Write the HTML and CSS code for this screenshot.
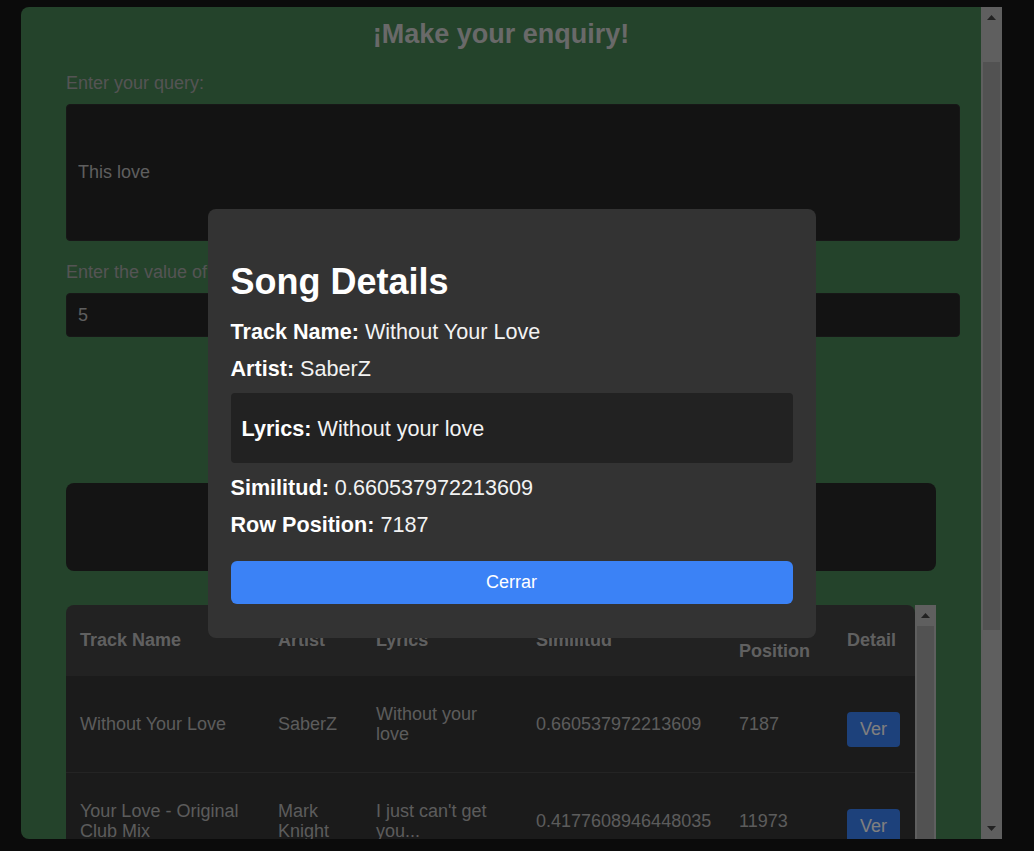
FILE: index.html
```html
<!DOCTYPE html>
<html lang="en">
<head>
<meta charset="utf-8">
<title>¡Make your enquiry!</title>
<link rel="stylesheet" href="styles.css">
</head>
<body>
<div class="frame">
  <div class="app">
    <main class="app-scroll">
      <h1 class="title">¡Make your enquiry!</h1>
      <form class="query-form">
        <div class="field">
          <label class="field-label" for="query">Enter your query:</label>
          <input class="field-input field-input--tall" id="query" type="text" value="This love">
        </div>
        <div class="field field--last">
          <label class="field-label" for="topk">Enter the value of k:</label>
          <input class="field-input" id="topk" type="text" value="5">
        </div>
        <div class="actions">
          <button class="search-btn" type="button">Search</button>
        </div>
      </form>

      <section class="results-box" aria-label="Results"></section>

      <div class="table-scroll">
        <div class="table-viewport">
          <table class="results-table">
            <colgroup>
              <col class="col-track">
              <col class="col-artist">
              <col class="col-lyrics">
              <col class="col-sim">
              <col class="col-pos">
              <col class="col-detail">
            </colgroup>
            <thead>
              <tr>
                <th>Track Name</th>
                <th>Artist</th>
                <th>Lyrics</th>
                <th>Similitud</th>
                <th>Row Position</th>
                <th>Detail</th>
              </tr>
            </thead>
            <tbody>
              <tr>
                <td>Without Your Love</td>
                <td>SaberZ</td>
                <td>Without your love</td>
                <td>0.660537972213609</td>
                <td>7187</td>
                <td><button class="ver-btn" type="button">Ver</button></td>
              </tr>
              <tr>
                <td>Your Love - Original Club Mix</td>
                <td>Mark Knight</td>
                <td>I just can't get you...</td>
                <td>0.4177608946448035</td>
                <td>11973</td>
                <td><button class="ver-btn" type="button">Ver</button></td>
              </tr>
              <tr>
                <td>This Love</td>
                <td>Maroon 5</td>
                <td>I was so high I did not...</td>
                <td>0.3981265417720384</td>
                <td>2044</td>
                <td><button class="ver-btn" type="button">Ver</button></td>
              </tr>
              <tr>
                <td>Love Me Like You Do</td>
                <td>Ellie Goulding</td>
                <td>You're the light, you're...</td>
                <td>0.3725519083371904</td>
                <td>9310</td>
                <td><button class="ver-btn" type="button">Ver</button></td>
              </tr>
              <tr>
                <td>Crazy in Love</td>
                <td>Beyoncé</td>
                <td>Yes, so crazy right now...</td>
                <td>0.3560271984436611</td>
                <td>15402</td>
                <td><button class="ver-btn" type="button">Ver</button></td>
              </tr>
            </tbody>
          </table>
        </div>
        <div class="vscroll" aria-hidden="true">
          <div class="vscroll-btn">
            <svg class="vscroll-arrow" width="9" height="5" viewBox="0 0 9 5"><polygon points="0,5 4.5,0 9,5"/></svg>
          </div>
          <div class="vscroll-track">
            <div class="vscroll-thumb vscroll-thumb--table"></div>
          </div>
          <div class="vscroll-btn">
            <svg class="vscroll-arrow" width="9" height="5" viewBox="0 0 9 5"><polygon points="0,0 9,0 4.5,5"/></svg>
          </div>
        </div>
      </div>
    </main>

    <div class="vscroll" aria-hidden="true">
      <div class="vscroll-btn">
        <svg class="vscroll-arrow" width="9" height="5" viewBox="0 0 9 5"><polygon points="0,5 4.5,0 9,5"/></svg>
      </div>
      <div class="vscroll-track vscroll-track--main">
        <div class="vscroll-thumb vscroll-thumb--main"></div>
      </div>
      <div class="vscroll-btn">
        <svg class="vscroll-arrow" width="9" height="5" viewBox="0 0 9 5"><polygon points="0,0 9,0 4.5,5"/></svg>
      </div>
    </div>
  </div>
</div>

<div class="overlay">
  <div class="modal" role="dialog" aria-labelledby="modal-title">
    <h2 class="modal-title" id="modal-title">Song Details</h2>
    <p class="modal-line"><strong>Track Name:</strong> Without Your Love</p>
    <p class="modal-line"><strong>Artist:</strong> SaberZ</p>
    <div class="lyrics-box">
      <p class="modal-line"><strong>Lyrics:</strong> Without your love</p>
    </div>
    <p class="modal-line"><strong>Similitud:</strong> 0.660537972213609</p>
    <p class="modal-line"><strong>Row Position:</strong> 7187</p>
    <button class="close-btn" type="button">Cerrar</button>
  </div>
</div>
</body>
</html>
```

FILE: styles.css
```css
html, body {
  margin: 0;
  height: 100%;
  overflow: hidden;
  background: #161616;
  font-family: "Liberation Sans", Arial, sans-serif;
  font-size: 18px;
}

.frame {
  height: 100%;
  box-sizing: border-box;
  padding: 7px 32px 12px 21px;
}

.app {
  height: 100%;
  display: flex;
}

.app-scroll {
  flex: 1;
  min-width: 0;
  overflow: hidden;
  box-sizing: border-box;
  padding: 12px 45px 0;
  background: #488656;
  border-radius: 8px 0 0 8px;
}

.title {
  margin: 0 0 23px;
  font-size: 27px;
  font-weight: bold;
  line-height: 31px;
  color: #d2d2d2;
  text-align: center;
}

.query-form {
  margin: 0;
}

.field {
  margin-bottom: 21px;
}

.field--last {
  margin-bottom: 0;
}

.field-label {
  display: block;
  margin-bottom: 10px;
  color: #a8a8a8;
  font-size: 18px;
  line-height: 21px;
}

.field-input {
  display: block;
  width: 100%;
  height: 42px;
  padding: 0 11px;
  margin: 0;
  border: 1px solid #2e2e2e;
  border-radius: 4px;
  background: #262626;
  color: #bcbcbc;
  font: inherit;
  outline: none;
}

.field-input--tall {
  height: 135px;
}

.actions {
  display: flex;
  justify-content: center;
  padding: 40px 0;
}

.search-btn {
  width: 140px;
  height: 44px;
  border: none;
  border-radius: 6px;
  background: #3b82f6;
  color: #fff;
  font: inherit;
}

.results-box {
  margin: 22px 0 34px;
  height: 88px;
  border-radius: 8px;
  background: #282828;
}

.table-scroll {
  height: 400px;
  display: flex;
}

.table-viewport {
  flex: 1;
  min-width: 0;
  overflow: hidden;
}

.results-table {
  width: 100%;
  table-layout: fixed;
  border-collapse: separate;
  border-spacing: 0;
  font-size: 18px;
  line-height: 20.7px;
}

.col-track { width: 198px; }
.col-artist { width: 98px; }
.col-lyrics { width: 160px; }
.col-sim { width: 203px; }
.col-pos { width: 108px; }
.col-detail { width: 82px; }

.results-table th {
  padding: 15px 14px;
  background: #444;
  color: #c0c0c0;
  text-align: left;
  font-weight: bold;
  vertical-align: middle;
}

.results-table th:first-child { border-top-left-radius: 8px; }
.results-table th:last-child { border-top-right-radius: 8px; }

.results-table td {
  padding: 25px 14px;
  background: #363636;
  color: #b8b8b8;
  border-bottom: 1px solid #484848;
  vertical-align: middle;
}

.ver-btn {
  display: block;
  margin-top: 11px;
  padding: 7px 13px;
  border: none;
  border-radius: 4px;
  background: #3b82f6;
  color: #fff;
  font: inherit;
  line-height: 21px;
}

/* scrollbars (drawn) */
.vscroll {
  flex: none;
  width: 21px;
  display: flex;
  flex-direction: column;
  background: #bebebe;
}

.vscroll-btn {
  flex: none;
  height: 21px;
  display: flex;
  align-items: center;
  justify-content: center;
}

.vscroll-arrow {
  display: block;
  fill: #444;
}

.vscroll-track {
  flex: 1;
  min-height: 0;
  overflow: hidden;
  padding: 0 2px;
}

.vscroll-track--main {
  padding-top: 34px;
}

.vscroll-thumb {
  background: #a4a4a4;
}

.vscroll-thumb--main {
  height: 568px;
}

.vscroll-thumb--table {
  height: 258px;
}

/* modal */
.overlay {
  position: fixed;
  inset: 0;
  box-sizing: border-box;
  padding: 7px 32px 12px 21px;
  background: rgba(0, 0, 0, 0.5);
  display: flex;
  align-items: center;
  justify-content: center;
}

.modal {
  width: 608px;
  box-sizing: border-box;
  padding: 23px;
  background: #333;
  border-radius: 8px;
  color: #f2f2f2;
}

.modal-title {
  margin: 29px 0 17px;
  font-size: 36px;
  font-weight: bold;
  line-height: 41px;
  color: #fff;
}

.modal-line {
  margin: 12px 0;
  font-size: 21.6px;
  line-height: 25px;
}

.modal-line strong {
  color: #fff;
}

.lyrics-box {
  margin: 12px 0;
  padding: 11px 11px 10px;
  border-radius: 4px;
  background: #222;
}

.close-btn {
  display: block;
  width: 100%;
  height: 43px;
  margin: 24px 0 11px;
  border: none;
  border-radius: 6px;
  background: #3b82f6;
  color: #fff;
  font: inherit;
  font-size: 18px;
}
```
